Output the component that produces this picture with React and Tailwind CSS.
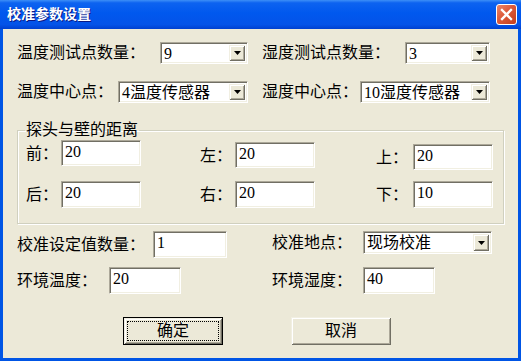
import React from "react";

// XP-style "校准参数设置" dialog.
const FONT = { fontFamily: '"Liberation Serif", "Noto Sans CJK SC", serif' };

const SUNKEN =
  "border border-t-[#aca899] border-l-[#aca899] border-b-white border-r-white bg-white shadow-[inset_1px_1px_0_#716f64,inset_-1px_-1px_0_#f1efe2]";

const RAISED =
  "bg-[#ece9d8] shadow-[inset_1px_1px_0_#f1efe2,inset_-1px_-1px_0_#716f64,inset_2px_2px_0_#ffffff,inset_-2px_-2px_0_#aca899]";

function Label({ children, className = "" }) {
  return (
    <div className={`shrink-0 whitespace-nowrap text-[16px] leading-[18px] text-black ${className}`}>
      {children}
    </div>
  );
}

function Field({ value, className = "" }) {
  return (
    <div className={`${SUNKEN} shrink-0 pl-[3px] pt-[2px] text-[16px] leading-[18px] text-black ${className}`}>
      {value}
    </div>
  );
}

function Combo({ value, className = "" }) {
  return (
    <div className={`${SUNKEN} flex shrink-0 p-[2px] ${className}`}>
      <div className="flex-1 whitespace-nowrap pl-[1px] text-[16px] leading-[17px] text-black">{value}</div>
      <div className={`${RAISED} flex w-[16px] items-center justify-center`}>
        <svg width="7" height="4" viewBox="0 0 7 4">
          <path d="M0 0h7L3.5 4z" fill="#000" />
        </svg>
      </div>
    </div>
  );
}

function Button({ children, primary }) {
  if (primary) {
    return (
      <div className="h-[28px] w-[100px] border border-black">
        <div className={`${RAISED} h-full w-full p-[3px]`}>
          <div className="flex h-full w-full items-center justify-center border border-dotted border-black text-[16px] leading-[18px]">
            {children}
          </div>
        </div>
      </div>
    );
  }
  return (
    <div className={`${RAISED} flex h-[28px] w-[100px] items-center justify-center text-[16px] leading-[18px]`}>
      {children}
    </div>
  );
}

export default function App() {
  return (
    <div className="flex h-[361px] w-[521px] flex-col bg-[#0055e5]" style={FONT}>
      {/* title bar */}
      <div className="flex h-[29px] items-center justify-between bg-[linear-gradient(to_bottom,#3d8ff7_0%,#0d63f0_10%,#0058ee_45%,#0453e8_85%,#0040d0_100%)] pl-[7px] pr-[4px]">
        <div className="text-[14px] font-bold leading-[16px] text-white [text-shadow:1px_1px_0_#0a1a84]">
          校准参数设置
        </div>
        <div className="flex h-[21px] w-[21px] items-center justify-center rounded-[3px] border border-white bg-[linear-gradient(135deg,#e9866a_0%,#dd5a3a_45%,#c43d1c_100%)]">
          <svg width="13" height="13" viewBox="0 0 13 13">
            <path d="M2 2L11 11M11 2L2 11" stroke="#fff" strokeWidth="2.3" strokeLinecap="square" />
          </svg>
        </div>
      </div>

      {/* client area */}
      <div className="mx-[3px] mb-[3px] flex flex-1 flex-col bg-[#ece9d8] pl-[14px]">
        <div className="mt-[13px] flex h-[22px] items-center">
          <Label className="w-[143px]">温度测试点数量：</Label>
          <Combo value="9" className="h-[22px] w-[88px]" />
          <Label className="ml-[14px] w-[143px]">湿度测试点数量：</Label>
          <Combo value="3" className="h-[22px] w-[85px]" />
        </div>
        <div className="mt-[17px] flex h-[22px] items-center">
          <Label className="w-[101px]">温度中心点：</Label>
          <Combo value="4温度传感器" className="h-[22px] w-[130px]" />
          <Label className="ml-[14px] w-[98px]">湿度中心点：</Label>
          <Combo value="10湿度传感器" className="h-[22px] w-[130px]" />
        </div>

        <fieldset className="mt-[19px] h-[102px] w-[487px] border border-[#d0d0bf] pl-[8px] shadow-[inset_1px_1px_0_#ffffff,1px_1px_0_#ffffff]">
          <legend className="ml-[-1px] px-[1px] text-[16px] leading-[16px]">探头与壁的距离</legend>
          <div className="mt-[2px] flex h-[28px] items-start">
            <Label className="mt-[5px] w-[35px]">前：</Label>
            <Field value="20" className="h-[26px] w-[80px]" />
            <Label className="ml-[59px] mt-[7px] w-[35px]">左：</Label>
            <Field value="20" className="mt-[2px] h-[26px] w-[80px]" />
            <Label className="ml-[61px] mt-[9px] w-[37px]">上：</Label>
            <Field value="20" className="mt-[4px] h-[26px] w-[80px]" />
          </div>
          <div className="mt-[13px] flex h-[27px] items-center">
            <Label className="w-[35px]">后：</Label>
            <Field value="20" className="h-[27px] w-[80px]" />
            <Label className="ml-[59px] w-[35px]">右：</Label>
            <Field value="20" className="h-[27px] w-[80px]" />
            <Label className="ml-[61px] w-[37px]">下：</Label>
            <Field value="10" className="h-[27px] w-[80px]" />
          </div>
        </fieldset>

        <div className="mt-[7px] flex h-[27px] items-center">
          <Label className="w-[136px]">校准设定值数量：</Label>
          <Field value="1" className="h-[27px] w-[74px]" />
          <Label className="ml-[45px] w-[91px] self-start pt-[3px]">校准地点：</Label>
          <Combo value="现场校准" className="h-[23px] w-[129px] self-start" />
        </div>
        <div className="mt-[9px] flex h-[27px] items-center">
          <Label className="w-[92px]">环境温度：</Label>
          <Field value="20" className="h-[27px] w-[72px]" />
          <Label className="ml-[91px] w-[91px]">环境湿度：</Label>
          <Field value="40" className="h-[27px] w-[72px]" />
        </div>

        <div className="mt-[23px] flex gap-[68px] pl-[106px]">
          <Button primary>确定</Button>
          <Button>取消</Button>
        </div>
      </div>
    </div>
  );
}
